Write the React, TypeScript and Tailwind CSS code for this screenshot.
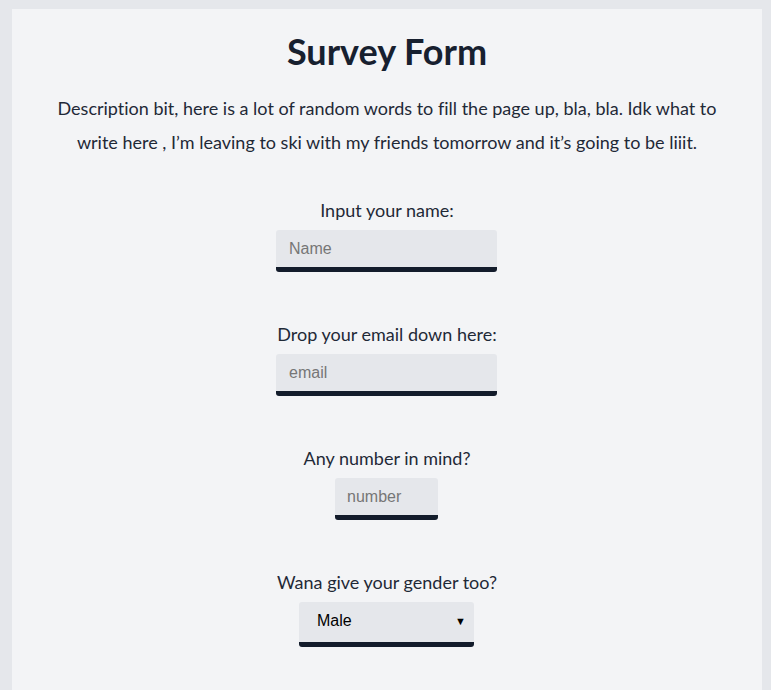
import React from "react";

export default function App() {
  const font = { fontFamily: "Lato, 'Noto Sans', sans-serif" };
  const inputFont = { fontFamily: "'Liberation Sans', Arial, sans-serif" };
  return (
    <div className="min-h-[690px] bg-[#e5e7eb] pt-[9px] pl-3 pr-[9px]">
      <div className="min-h-[681px] bg-[#f3f4f6] text-[#111827] text-center [font-variant-ligatures:none]" style={font}>
        <h1 className="pt-[20px] text-[36px] font-bold leading-[44px] text-[#17202f]">Survey Form</h1>
        <p className="mt-[18px] px-[36px] text-[18px] leading-[34px] text-[#1f2937]">
          Description bit, here is a lot of random words to fill the page up, bla, bla. Idk what to write here , I’m leaving to ski with my friends tomorrow and it’s going to be liiit.
        </p>
        <form className="mt-[39px] flex flex-col items-center">
          <label className="text-[18px] leading-[24px] text-[#1f2937]">Input your name:</label>
          <input
            placeholder="Name"
            className="mt-[8px] mr-[1px] h-[42px] w-[221px] rounded-[3px] border-b-[5px] border-[#131c2b] bg-[#e5e7eb] px-[13px] text-[16px] outline-none placeholder:text-[#767676]"
            style={inputFont}
          />
          <label className="mt-[50px] text-[18px] leading-[24px] text-[#1f2937]">Drop your email down here:</label>
          <input
            placeholder="email"
            className="mt-[8px] mr-[1px] h-[42px] w-[221px] rounded-[3px] border-b-[5px] border-[#131c2b] bg-[#e5e7eb] px-[13px] text-[16px] outline-none placeholder:text-[#767676]"
            style={inputFont}
          />
          <label className="mt-[50px] text-[18px] leading-[24px] text-[#1f2937]">Any number in mind?</label>
          <input
            placeholder="number"
            className="mt-[8px] mr-[1px] h-[42px] w-[103px] rounded-[3px] border-b-[5px] border-[#131c2b] bg-[#e5e7eb] px-[12px] text-[16px] outline-none placeholder:text-[#767676]"
            style={inputFont}
          />
          <label className="mt-[50px] text-[18px] leading-[24px] text-[#1f2937]">Wana give your gender too?</label>
          <div
            className="relative mt-[8px] mr-[1px] flex h-[45px] w-[175px] items-center rounded-[3px] border-b-[5px] border-[#131c2b] bg-[#e5e7eb] pl-[18px] text-left text-[16px] text-black"
            style={inputFont}
          >
            <span className="-mt-[2px]">Male</span>
            <span className="absolute right-[8px] top-[14px] text-[11px] leading-none">▼</span>
          </div>
        </form>
      </div>
    </div>
  );
}
